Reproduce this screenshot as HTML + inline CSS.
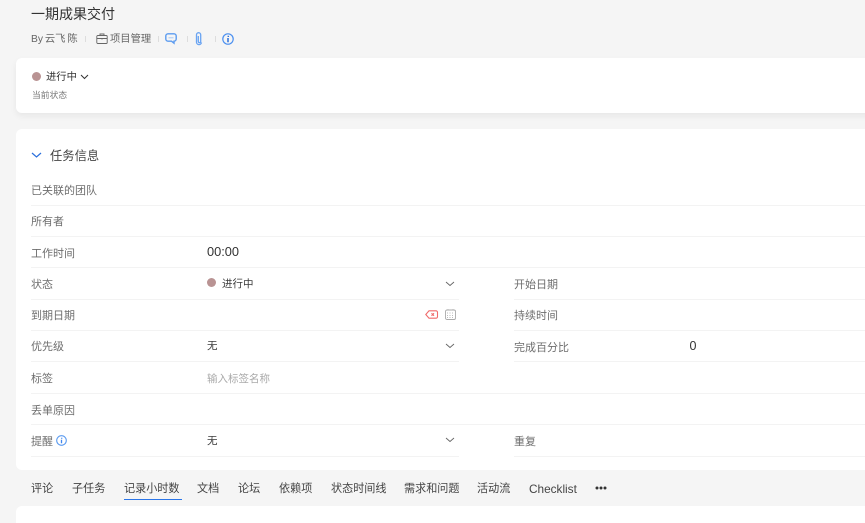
<!DOCTYPE html>
<html><head><meta charset="utf-8">
<style>
html,body{margin:0;padding:0;width:865px;height:523px;overflow:hidden;background:#f5f5f5}
body{position:relative;font-family:"Liberation Sans","Noto Sans CJK SC",sans-serif;color:#333}
#w{position:absolute;left:0;top:0;width:865px;height:523px;overflow:hidden;filter:blur(.3px)}
.a{position:absolute;white-space:nowrap;line-height:16px}
.card{position:absolute;left:16px;width:860px;background:#fff;border-radius:6px}
.l{font-size:11px;color:#6e6e6e}
.v{font-size:10.5px;color:#3a3a3a}
.ln{position:absolute;height:1px;background:#f3f3f3}
.s{position:absolute;width:1px;height:6px;top:36px;background:#ddd}
.t{font-size:11.1px;color:#444;top:481px}
svg{position:absolute;overflow:visible;fill:none}
</style></head><body><div id="w">
<div class="a" style="left:31px;top:6px;font-size:14px;color:#333">一期成果交付</div>
<div class="a" style="left:31px;top:32px;font-size:10.3px;color:#666;word-spacing:-1px">By 云飞 陈</div>
<div class="s" style="left:85px"></div>
<svg style="left:96px;top:33px" width="12" height="12" viewBox="0 0 12 12" stroke="#666" stroke-width=".9"><rect x=".8" y="2.500" width="10.400" height="8" rx="1"/><path d="M4 2.500V1h4v1.500M1 5.500h10M6 5v1.500"/></svg>
<div class="a" style="left:110px;top:32px;font-size:10.3px;color:#666">项目管理</div>
<div class="s" style="left:158px"></div>
<svg style="left:165px;top:33px" width="12" height="12" viewBox="0 0 12 12" stroke="#5b9bf0" stroke-width="1.400"><path d="M3 .8h6A2.200 2.200 0 0 1 11.200 3v3A2.200 2.200 0 0 1 9 8.200v2L6.500 8.200H3A2.200 2.200 0 0 1 .8 6V3A2.200 2.200 0 0 1 3 .8z"/><path d="M3.500 4.800h5" stroke="#a5c8f6" stroke-width="1"/></svg>
<div class="s" style="left:187px"></div>
<svg style="left:195px;top:32px" width="8" height="13" viewBox="0 0 8 13" stroke="#6aa4f2" stroke-width="1.300"><path d="M3.300 4v5.500a1.200 1.200 0 0 0 2.400 0V2.800a2 2 0 0 0-4.200 0v7a2.500 2.500 0 0 0 5 .6"/></svg>
<div class="s" style="left:215px"></div>
<svg style="left:222px;top:33px" width="12" height="12" viewBox="0 0 12 12"><circle cx="6" cy="6" r="5.200" stroke="#4a8ff0" stroke-width="1.200"/><path d="M6.300 2.800v1.200M6 5v4.200" stroke="#2a6fdc" stroke-width="1.500"/></svg>

<div class="card" style="top:58px;height:55px;box-shadow:0 3px 7px rgba(0,0,0,.06)"></div>
<div class="a" style="left:32px;top:72px;width:9px;height:9px;border-radius:50%;background:#b99393"></div>
<div class="a" style="left:46px;top:70px;font-size:10.300px;color:#333">进行中</div>
<svg style="left:80px;top:74px" width="9" height="6" viewBox="0 0 9 6" stroke="#333" stroke-width="1"><path d="M1 1l3.500 3.500L8 1"/></svg>
<div class="a" style="left:32px;top:87px;font-size:8.800px;color:#777">当前状态</div>

<div class="card" style="top:129px;height:341px"></div>
<svg style="left:31px;top:152px" width="11" height="7" viewBox="0 0 11 7" stroke="#2a6fdc" stroke-width="1.200"><path d="M1 1l4.500 4L10 1"/></svg>
<div class="a" style="left:50px;top:148px;font-size:12.300px;color:#444">任务信息</div>

<div class="a l" style="left:31px;top:182.500px">已关联的团队</div>
<div class="ln" style="left:31px;top:205px;width:834px"></div>
<div class="a l" style="left:31px;top:213.500px">所有者</div>
<div class="ln" style="left:31px;top:236px;width:834px"></div>
<div class="a l" style="left:31px;top:245.500px">工作时间</div>
<div class="a" style="left:207px;top:244px;font-size:12.800px;color:#333">00:00</div>
<div class="ln" style="left:31px;top:267px;width:834px"></div>

<div class="a l" style="left:31px;top:277px">状态</div>
<div class="a" style="left:207px;top:278px;width:9px;height:9px;border-radius:50%;background:#b99393"></div>
<div class="a v" style="left:222px;top:276px">进行中</div>
<svg style="left:445px;top:281px" width="10" height="6" viewBox="0 0 10 6" stroke="#666" stroke-width=".9"><path d="M1 1l4 3.500L9 1"/></svg>
<div class="a l" style="left:514px;top:277px">开始日期</div>
<div class="ln" style="left:31px;top:299px;width:428px"></div>
<div class="ln" style="left:514px;top:299px;width:351px"></div>

<div class="a l" style="left:31px;top:308px">到期日期</div>
<svg style="left:425px;top:310px" width="13" height="9" viewBox="0 0 13 9" stroke="#f06a6a" stroke-width="1.100"><path d="M4 .8h7a1.500 1.500 0 0 1 1.500 1.500v4.400A1.500 1.500 0 0 1 11 8.200H4L.8 4.500z"/><path d="M6.500 3.200l2.500 2.600M9 3.200L6.500 5.800"/></svg>
<svg style="left:445px;top:309px" width="11" height="11" viewBox="0 0 11 11" stroke="#aaa" stroke-width=".9"><rect x=".5" y="1" width="10" height="9.500" rx="1.500"/><path d="M3 0v2M8 0v2M2 4h7M2 6.500h7M2 8.500h7" stroke-dasharray="1 1.500" stroke="#bbb"/></svg>
<div class="a l" style="left:514px;top:308px">持续时间</div>
<div class="ln" style="left:31px;top:330px;width:428px"></div>
<div class="ln" style="left:514px;top:330px;width:351px"></div>

<div class="a l" style="left:31px;top:339px">优先级</div>
<div class="a v" style="left:207px;top:338px">无</div>
<svg style="left:445px;top:343px" width="10" height="6" viewBox="0 0 10 6" stroke="#666" stroke-width=".9"><path d="M1 1l4 3.500L9 1"/></svg>
<div class="a l" style="left:514px;top:339.500px">完成百分比</div>
<div class="a" style="left:689.500px;top:338px;font-size:12.500px;color:#333">0</div>
<div class="ln" style="left:31px;top:361px;width:428px"></div>
<div class="ln" style="left:514px;top:361px;width:351px"></div>

<div class="a l" style="left:31px;top:371px">标签</div>
<div class="a" style="left:207px;top:371px;font-size:10.500px;color:#aaa">输入标签名称</div>
<div class="ln" style="left:31px;top:393px;width:834px"></div>
<div class="a l" style="left:31px;top:403px">丢单原因</div>
<div class="ln" style="left:31px;top:424px;width:834px"></div>

<div class="a l" style="left:31px;top:434px">提醒</div>
<svg style="left:56px;top:435px" width="11" height="11" viewBox="0 0 11 11"><circle cx="5.500" cy="5.500" r="4.800" stroke="#5b9bf0" stroke-width="1.100"/><path d="M5.700 2.800v1M5.500 4.800v3.500" stroke="#3f86ee" stroke-width="1.300"/></svg>
<div class="a v" style="left:207px;top:433px">无</div>
<svg style="left:445px;top:437px" width="10" height="6" viewBox="0 0 10 6" stroke="#666" stroke-width=".9"><path d="M1 1l4 3.500L9 1"/></svg>
<div class="a l" style="left:514px;top:433.500px">重复</div>
<div class="ln" style="left:31px;top:456px;width:428px"></div>
<div class="ln" style="left:514px;top:456px;width:351px"></div>

<div class="a t" style="left:31px">评论</div>
<div class="a t" style="left:72px">子任务</div>
<div class="a t" style="left:124px">记录小时数</div>
<div style="position:absolute;left:124px;top:498.500px;width:58px;height:1.500px;background:#2a75e8"></div>
<div class="a t" style="left:197px">文档</div>
<div class="a t" style="left:238px">论坛</div>
<div class="a t" style="left:279px">依赖项</div>
<div class="a t" style="left:331px">状态时间线</div>
<div class="a t" style="left:404px">需求和问题</div>
<div class="a t" style="left:477px">活动流</div>
<div class="a t" style="left:529px;font-size:11.800px">Checklist</div>
<svg style="left:595px;top:485.500px" width="12" height="4" viewBox="0 0 12 4"><circle cx="2" cy="2" r="1.500" fill="#333"/><circle cx="6" cy="2" r="1.500" fill="#333"/><circle cx="10" cy="2" r="1.500" fill="#333"/></svg>
<div class="card" style="top:506px;height:40px"></div>
</div></body></html>
